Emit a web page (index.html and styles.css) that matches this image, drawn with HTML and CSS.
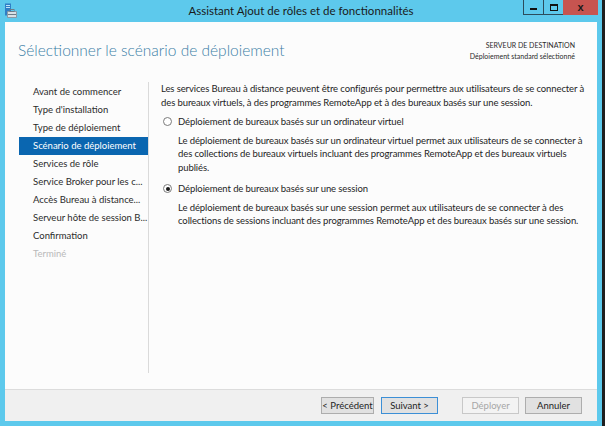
FILE: index.html
```html
<!DOCTYPE html>
<html lang="fr">
<head>
<meta charset="utf-8">
<title>Assistant Ajout de rôles et de fonctionnalités</title>
<link rel="stylesheet" href="styles.css">
</head>
<body>
<div class="window">
  <div class="titlebar">
    <div class="app-icon">
      <svg width="14" height="16" viewBox="0 0 14 16">
        <rect x="1" y="0.5" width="6" height="12" fill="#2f7fc6"/>
        <rect x="2" y="2" width="4" height="1" fill="#bfe3f7"/>
        <rect x="2" y="4" width="4" height="1" fill="#bfe3f7"/>
        <rect x="3" y="8" width="10" height="7" rx="1" fill="#8a9aa6"/>
        <rect x="4" y="9" width="8" height="5" fill="#d9e1e6"/>
        <rect x="6" y="6.5" width="4" height="2" fill="none" stroke="#6d7d88" stroke-width="1"/>
        <rect x="4" y="11" width="8" height="1" fill="#6d7d88"/>
      </svg>
    </div>
    <div class="title">Assistant Ajout de rôles et de fonctionnalités</div>
    <div class="controls">
      <span class="ctl ctl-min"><i></i></span>
      <span class="ctl ctl-max"><i></i></span>
      <span class="ctl ctl-close">x</span>
    </div>
  </div>
  <div class="client">
    <div class="header">
      <h1 class="page-title">Sélectionner le scénario de déploiement</h1>
      <div class="dest">
        <div>SERVEUR DE DESTINATION</div>
        <div>Déploiement standard sélectionné</div>
      </div>
    </div>
    <div class="body">
      <nav class="steps">
        <div class="step">Avant de commencer</div>
        <div class="step">Type d'installation</div>
        <div class="step">Type de déploiement</div>
        <div class="step active">Scénario de déploiement</div>
        <div class="step">Services de rôle</div>
        <div class="step">Service Broker pour les c...</div>
        <div class="step">Accès Bureau à distance...</div>
        <div class="step">Serveur hôte de session B...</div>
        <div class="step">Confirmation</div>
        <div class="step disabled">Terminé</div>
      </nav>
      <main class="content">
        <p class="intro">Les services Bureau à distance peuvent être configurés pour permettre aux utilisateurs de se connecter à des bureaux virtuels, à des programmes RemoteApp et à des bureaux basés sur une session.</p>
        <div class="option option-first">
          <span class="radio"></span>
          <span>Déploiement de bureaux basés sur un ordinateur virtuel</span>
        </div>
        <p class="desc">Le déploiement de bureaux basés sur un ordinateur virtuel permet aux utilisateurs de se connecter à des collections de bureaux virtuels incluant des programmes RemoteApp et des bureaux virtuels publiés.</p>
        <div class="option">
          <span class="radio checked"></span>
          <span>Déploiement de bureaux basés sur une session</span>
        </div>
        <p class="desc">Le déploiement de bureaux basés sur une session permet aux utilisateurs de se connecter à des collections de sessions incluant des programmes RemoteApp et des bureaux basés sur une session.</p>
      </main>
    </div>
    <div class="footer">
      <button class="btn btn-prev">&lt; Précédent</button>
      <button class="btn btn-next">Suivant &gt;</button>
      <button class="btn btn-deploy" disabled>Déployer</button>
      <button class="btn btn-cancel">Annuler</button>
    </div>
  </div>
</div>
</body>
</html>
```
FILE: styles.css
```css
html, body {
  margin: 0;
  padding: 0;
}
body {
  width: 605px;
  height: 426px;
  background: #1f1f1f;
  overflow: hidden;
  font-family: Lato, "Liberation Sans", sans-serif;
  color: #1e1e1e;
}
.window {
  width: 602px;
  height: 426px;
  background: #5dc9ec;
  display: flex;
  flex-direction: column;
}
.titlebar {
  height: 22px;
  flex: none;
  display: grid;
  grid-template-columns: 1fr auto 1fr;
  align-items: start;
}
.app-icon {
  padding: 3px 0 0 4px;
  height: 16px;
}
.app-icon svg {
  display: block;
}
.title {
  font-size: 11.5px;
  line-height: 22px;
  color: #1a1a1a;
}
.controls {
  justify-self: end;
  display: flex;
  margin-right: 4px;
}
.ctl {
  height: 15px;
  display: flex;
  align-items: center;
  justify-content: center;
  box-sizing: border-box;
}
.ctl-min, .ctl-max {
  width: 20px;
  border-left: 1px solid #2c4c5c;
  border-bottom: 1px solid #2c4c5c;
}
.ctl-min i {
  display: block;
  width: 7px;
  height: 2px;
  background: #111;
  margin-top: 4px;
}
.ctl-max i {
  display: block;
  width: 6px;
  height: 4px;
  border: 1px solid #111;
  border-top-width: 2px;
}
.ctl-close {
  width: 35px;
  background: #c75450;
  font-family: "Liberation Sans", sans-serif;
  font-weight: bold;
  font-size: 11px;
  color: #1a1a1a;
  line-height: 15px;
}
.client {
  flex: 1;
  margin: 0 5px 5px 5px;
  background: #fcfcfc;
  display: flex;
  flex-direction: column;
  min-height: 0;
}
.header {
  height: 60px;
  flex: none;
  display: flex;
  justify-content: space-between;
}
.page-title {
  margin: 0;
  padding: 17px 0 0 13px;
  font-family: Lato, "Open Sans", sans-serif;
  font-weight: 300;
  font-size: 15.5px;
  line-height: 22px;
  color: #3b7ea6;
}
.dest {
  padding: 18px 22px 0 0;
  text-align: right;
  font-size: 7px;
  line-height: 11px;
  color: #2a2a2a;
}
.body {
  flex: 1;
  display: flex;
  min-height: 0;
}
.steps {
  width: 144px;
  flex: none;
  border-right: 1px solid #dadada;
  margin-bottom: 16px;
  padding-top: 1px;
  box-sizing: border-box;
}
.step {
  height: 18px;
  line-height: 18px;
  margin-left: 14px;
  padding-left: 14px;
  font-size: 9.5px;
  color: #2b2b2b;
  white-space: nowrap;
  overflow: hidden;
}
.step.active {
  background: #0a66b0;
  color: #ffffff;
}
.step.disabled {
  color: #b9b9b9;
}
.content {
  flex: 1;
  padding: 0 4px 0 12px;
  font-size: 9.5px;
  line-height: 13.5px;
  letter-spacing: -0.1px;
}
.intro {
  margin: 0;
}
.option {
  display: flex;
  align-items: center;
  margin-top: 8px;
}
.option-first {
  margin-top: 6px;
}
.radio {
  width: 9px;
  height: 9px;
  box-sizing: border-box;
  border: 1px solid #7b7b7b;
  border-radius: 50%;
  background: #fff;
  margin: 0 6px 0 2px;
  display: flex;
  align-items: center;
  justify-content: center;
}
.radio.checked::after {
  content: "";
  width: 4px;
  height: 4px;
  border-radius: 50%;
  background: #1a1a1a;
}
.desc {
  margin: 5px 0 0 17px;
}
.footer {
  height: 32px;
  flex: none;
  box-sizing: border-box;
  border-top: 1px solid #dcdcdc;
  background: #f0f0f0;
  display: flex;
  justify-content: flex-end;
  align-items: flex-start;
  padding: 7px 15px 0 0;
}
.btn {
  height: 17px;
  width: 57px;
  margin: 0;
  padding: 0;
  box-sizing: border-box;
  border: 1px solid #adadad;
  background: #e1e1e1;
  font-family: Lato, "Liberation Sans", sans-serif;
  font-size: 9.5px;
  color: #1e1e1e;
}
.btn-prev {
  width: 53px;
  margin-right: 7px;
}
.btn-next {
  border-color: #3c8fd6;
  margin-right: 24px;
}
.btn-deploy {
  background: #f3f3f3;
  border-color: #c8c8c8;
  color: #a6a6a6;
  margin-right: 6px;
}
```
